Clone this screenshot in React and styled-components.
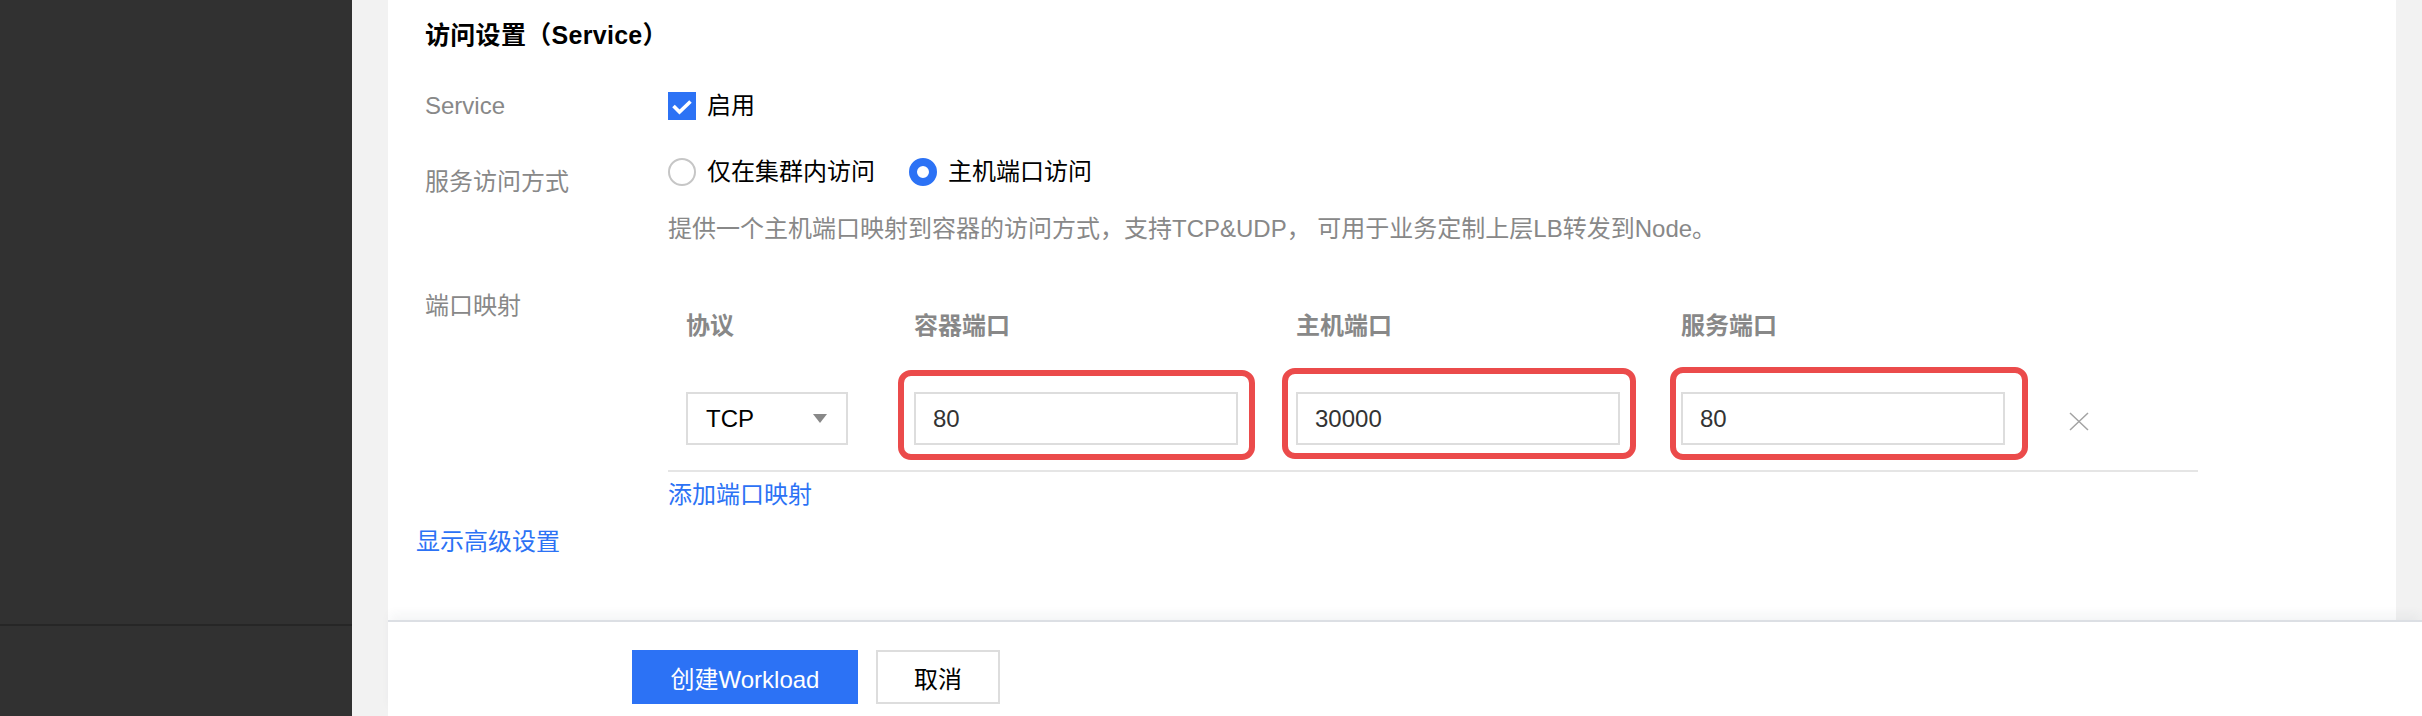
import styled, { createGlobalStyle } from 'styled-components'

const GlobalStyle = createGlobalStyle`
  html, body {
    margin: 0;
    padding: 0;
  }
  body {
    font-family: "Liberation Sans", "Noto Sans CJK SC", sans-serif;
    font-size: 24px;
    color: #000;
    background: #f2f2f2;
  }
  * {
    box-sizing: border-box;
  }
`

const BLUE = '#2c72f5'

const Page = styled.div`
  display: flex;
  height: 716px;
  overflow: hidden;
`

const Sidebar = styled.aside`
  width: 352px;
  flex-shrink: 0;
  background: #313131;
  display: flex;
  flex-direction: column;
  justify-content: flex-end;
`

const SidebarBottom = styled.div`
  height: 92px;
  border-top: 2px solid #262626;
`

const Main = styled.main`
  flex: 1;
  min-width: 0;
  display: flex;
  flex-direction: column;
  background: #f2f2f2;
`

const Content = styled.div`
  flex: 1;
  display: flex;
  flex-direction: column;
  padding: 0 26px 0 36px;
  overflow: hidden;
`

const Panel = styled.section`
  flex: 1;
  background: #fff;
  padding: 17px 0 0 37px;
`

const Heading = styled.h3`
  margin: 0;
  font-size: 25px;
  letter-spacing: 0.3px;
  line-height: 36px;
  font-weight: bold;
  color: #000;
`

const FormRow = styled.div`
  display: grid;
  grid-template-columns: 243px 1fr;
  margin-top: ${p => p.$top}px;
`

const Label = styled.div`
  color: #888;
  line-height: 36px;
  padding-top: ${p => p.$pad || 0}px;
`

const Controls = styled.div`
  display: flex;
  flex-direction: column;
`

const OptionLine = styled.div`
  display: flex;
  align-items: center;
  height: 36px;
  gap: 34px;
`

const Option = styled.label`
  display: flex;
  align-items: center;
  gap: 11px;
  line-height: 36px;
  color: #000;
`

const CheckBox = styled.span`
  width: 28px;
  height: 28px;
  background: ${BLUE};
  display: flex;
  align-items: center;
  justify-content: center;
`

const Radio = styled.span`
  width: 28px;
  height: 28px;
  border-radius: 50%;
  border: ${p => (p.$checked ? `8px solid ${BLUE}` : '2px solid #c6c6c6')};
  background: #fff;
`

const Hint = styled.p`
  margin: 21px 0 0;
  line-height: 36px;
  color: #888;
`

const Table = styled.div`
  display: grid;
  grid-template-columns: 228px 382px 385px 380px 1fr;
  width: 1530px;
`

const HeadCell = styled.div`
  height: 70px;
  display: flex;
  align-items: center;
  padding-left: 18px;
  color: #888;
  font-weight: bold;
`

const BodyCell = styled.div`
  height: 114px;
  padding: 34px 0 0 ${p => p.$pad || 18}px;
  border-bottom: 2px solid #e5e5e5;
`

const Select = styled.div`
  width: 162px;
  height: 53px;
  border: 2px solid #ddd;
  display: flex;
  align-items: center;
  justify-content: space-between;
  padding: 0 19px 0 18px;
  color: #000;
`

const Caret = styled.span`
  width: 0;
  height: 0;
  border-left: 7px solid transparent;
  border-right: 7px solid transparent;
  border-top: 9px solid #888;
`

const FieldWrap = styled.div`
  position: relative;
  width: 324px;
`

const Field = styled.input`
  width: 324px;
  height: 53px;
  border: 2px solid #ddd;
  padding: 0 0 0 17px;
  font: inherit;
  color: #333;
  outline: none;
  background: #fff;
`

const Highlight = styled.span`
  position: absolute;
  left: ${p => p.$x}px;
  top: ${p => p.$y}px;
  width: ${p => p.$w}px;
  height: ${p => p.$h}px;
  border: 6px solid #eb4b4b;
  border-radius: 13px;
  pointer-events: none;
`

const RemoveButton = styled.button`
  margin-top: 18px;
  width: 22px;
  height: 22px;
  padding: 0;
  border: 0;
  background: none;
  display: flex;
  align-items: center;
  justify-content: center;
`

const TextLink = styled.a`
  display: block;
  color: ${BLUE};
  line-height: 36px;
  text-decoration: none;
  margin-top: ${p => p.$top || 0}px;
  margin-left: ${p => p.$left || 0}px;
`

const Footer = styled.footer`
  height: 96px;
  margin-left: 36px;
  background: #fff;
  border-top: 2px solid #dcdfe4;
  box-shadow: 0 -8px 10px -2px rgba(40, 55, 80, 0.05);
  display: flex;
  align-items: flex-start;
  gap: 18px;
  padding: 28px 0 0 244px;
  position: relative;
`

const Button = styled.button`
  height: 54px;
  width: ${p => p.$w}px;
  font: inherit;
  border: ${p => (p.$primary ? 'none' : '2px solid #ddd')};
  background: ${p => (p.$primary ? BLUE : '#fff')};
  color: ${p => (p.$primary ? '#fff' : '#000')};
  padding: 0;
`

const ports = [
  { value: '80', box: { x: -16, y: -22, w: 357, h: 90 } },
  { value: '30000', box: { x: -14, y: -24, w: 354, h: 91 } },
  { value: '80', box: { x: -11, y: -25, w: 358, h: 93 } },
]

export default function App() {
  return (
    <>
      <GlobalStyle />
      <Page>
        <Sidebar>
          <SidebarBottom />
        </Sidebar>
        <Main>
          <Content>
            <Panel>
              <Heading>访问设置（Service）</Heading>

              <FormRow $top={35}>
                <Label>Service</Label>
                <Controls>
                  <OptionLine>
                    <Option>
                      <CheckBox>
                        <svg width="28" height="28" viewBox="0 0 28 28">
                          <path d="M5.5 14l6 6L22.5 9.5" fill="none" stroke="#fff" strokeWidth="3.6" />
                        </svg>
                      </CheckBox>
                      启用
                    </Option>
                  </OptionLine>
                </Controls>
              </FormRow>

              <FormRow $top={30}>
                <Label $pad={10}>服务访问方式</Label>
                <Controls>
                  <OptionLine>
                    <Option>
                      <Radio />
                      仅在集群内访问
                    </Option>
                    <Option>
                      <Radio $checked />
                      主机端口访问
                    </Option>
                  </OptionLine>
                  <Hint>提供一个主机端口映射到容器的访问方式，支持TCP&amp;UDP， 可用于业务定制上层LB转发到Node。</Hint>
                </Controls>
              </FormRow>

              <FormRow $top={41}>
                <Label>端口映射</Label>
                <Controls>
                  <Table>
                    <HeadCell>协议</HeadCell>
                    <HeadCell>容器端口</HeadCell>
                    <HeadCell>主机端口</HeadCell>
                    <HeadCell>服务端口</HeadCell>
                    <HeadCell />

                    <BodyCell>
                      <Select>
                        TCP
                        <Caret />
                      </Select>
                    </BodyCell>
                    {ports.map((p, i) => (
                      <BodyCell key={i}>
                        <FieldWrap>
                          <Field defaultValue={p.value} />
                          <Highlight $x={p.box.x} $y={p.box.y} $w={p.box.w} $h={p.box.h} />
                        </FieldWrap>
                      </BodyCell>
                    ))}
                    <BodyCell $pad={25}>
                      <RemoveButton>
                        <svg width="20" height="19" viewBox="0 0 20 19">
                          <path d="M1 1l18 17M19 1L1 18" stroke="#a3a3a3" strokeWidth="1.5" fill="none" />
                        </svg>
                      </RemoveButton>
                    </BodyCell>
                  </Table>
                  <TextLink $top={5}>添加端口映射</TextLink>
                </Controls>
              </FormRow>

              <TextLink $top={11} $left={-9}>显示高级设置</TextLink>
            </Panel>
          </Content>
          <Footer>
            <Button $primary $w={226}>创建Workload</Button>
            <Button $w={124}>取消</Button>
          </Footer>
        </Main>
      </Page>
    </>
  )
}
